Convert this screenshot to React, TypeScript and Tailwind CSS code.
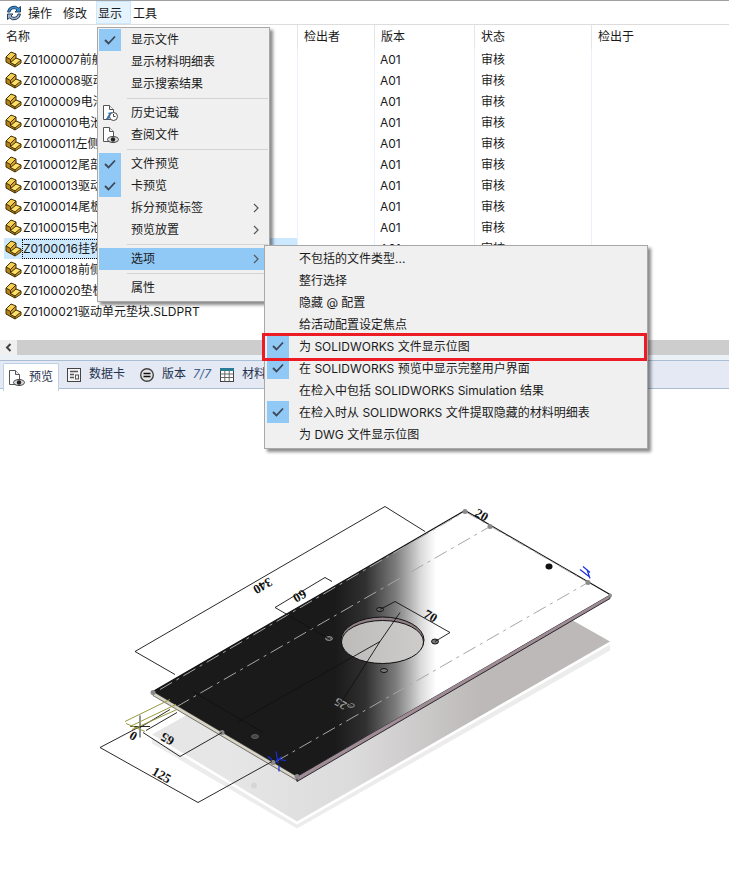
const names = ["Z0100007前舱","Z0100008驱动","Z0100009电池","Z0100010电池","Z0100011左侧","Z0100012尾部","Z0100013驱动","Z0100014尾板","Z0100015电池","Z0100016挂钩","Z0100018前侧","Z0100020垫板","Z0100021驱动单元垫块.SLDPRT"];

function PartIcon() {
  return (
    <svg width="17" height="17" viewBox="0 0 17 17" className="shrink-0">
      <path d="M1 6 L6 1 L11 3 L11 7 L16 9 V12 L10 16 L1 11 Z" fill="#d9a22a" />
      <path d="M1 6 L6 1 L11 3 L5.5 8.5 Z" fill="#f5cf50" />
      <path d="M5.5 11.5 L11 7 L16 9 L10 14 Z" fill="#fbe06c" />
      <path d="M1 6 L5.5 8.5 V11.5 L10 14 V16 L1 11 Z" fill="#b5821a" />
      <path d="M1 6 L6 1 L11 3 L11 7 L16 9 V12 L10 16 L1 11 Z M1 6 L5.5 8.5 L11 3 M5.5 8.5 V11.5 L10 14 L16 9 M10 14 V16 M5.5 11.5 L11 7" fill="none" stroke="#3f2f05" strokeWidth="1" strokeLinejoin="round" />
    </svg>
  );
}

function AppIcon() {
  return (
    <svg width="16" height="16" viewBox="0 0 16 16" className="shrink-0">
      <path d="M1.5 7 A6.5 6.5 0 0 1 12.5 3 L14.5 1.5 L14.5 7 L9 7 L11 5 A4 4 0 0 0 4 7 Z" fill="#2f8fd6" stroke="#27405e" strokeWidth="1" strokeLinejoin="round" />
      <path d="M14.5 9 A6.5 6.5 0 0 1 3.5 13 L1.5 14.5 L1.5 9 L7 9 L5 11 A4 4 0 0 0 12 9 Z" fill="#9fb3c6" stroke="#27405e" strokeWidth="1" strokeLinejoin="round" />
    </svg>
  );
}

function Doc({ children }: { children?: React.ReactNode }) {
  return (
    <svg width="18" height="18" viewBox="0 0 18 18" className="shrink-0">
      <path d="M2.5 1.5 H8.5 L12.5 5.5 V15.5 H2.5 Z" fill="#fff" stroke="#555" />
      <path d="M8.5 1.5 V5.5 H12.5" fill="#eee" stroke="#555" />
      {children}
    </svg>
  );
}

const EyeBits = (
  <>
    <ellipse cx="12" cy="13.5" rx="5.5" ry="3" fill="#d8d8d8" stroke="#444" />
    <circle cx="12" cy="13.5" r="2.2" fill="#222" />
  </>
);
const ClockBits = (
  <>
    <path d="M5 15 L8 10 L6.5 9 L11 8 L11.5 12 L10 11 L7.5 15 Z" fill="#2b78c4" />
    <circle cx="12.5" cy="12.5" r="4" fill="#fff" stroke="#444" />
    <path d="M12.5 10 V12.5 H14.5" fill="none" stroke="#444" />
  </>
);

function Check() {
  return (
    <svg width="12" height="10" viewBox="0 0 12 10">
      <path d="M1 5 L4.5 8.5 L11 1.5" fill="none" stroke="#3c4654" strokeWidth="1.8" />
    </svg>
  );
}

function Chevron() {
  return (
    <svg width="6" height="10" viewBox="0 0 6 10" className="shrink-0">
      <path d="M1 1 L5 5 L1 9" fill="none" stroke="#555" strokeWidth="1.2" />
    </svg>
  );
}

function MenuItem({ label, checked, icon, arrow, active }: { label: string; checked?: boolean; icon?: React.ReactNode; arrow?: boolean; active?: boolean }) {
  return (
    <div className={`flex h-[22px] items-center ${active ? "bg-[#90c8f6]" : ""}`}>
      <div className={`flex h-[22px] w-[22px] shrink-0 items-center justify-center ${checked ? "bg-[#90c8f6]" : ""}`}>
        {checked ? <Check /> : icon}
      </div>
      <span className="ml-[10px] flex-1 whitespace-nowrap">{label}</span>
      {arrow ? <div className="mr-[9px]"><Chevron /></div> : null}
    </div>
  );
}

function Sep() {
  return (
    <div className="flex h-[7px] items-center pl-[28px]">
      <div className="h-px w-full bg-[#d4d4d4]" />
    </div>
  );
}

function SubItem({ label, checked }: { label: string; checked?: boolean }) {
  return (
    <div className="flex h-[22px] items-center">
      <div className={`flex h-[22px] w-[22px] shrink-0 items-center justify-center ${checked ? "bg-[#90c8f6]" : ""}`}>
        {checked ? <Check /> : null}
      </div>
      <span className="ml-[10px] whitespace-nowrap pt-[2px]">{label}</span>
    </div>
  );
}

function Tab({ icon, label, extra, width }: { icon: React.ReactNode; label: string; extra?: string; width: string }) {
  return (
    <div className={`flex shrink-0 items-center gap-[7px] ${width}`}>
      {icon}
      <span className="mb-[2px] whitespace-nowrap text-[#1f3350]">{label}</span>
      {extra ? <span className="mb-[2px] italic text-[#3f5f95]">{extra}</span> : null}
    </div>
  );
}

function Plate() {
  const dash = "14 5 3 5";
  return (
    <svg viewBox="0 390 729 491" className="h-full w-full" fontFamily="'Liberation Serif', serif">
      <defs>
        <linearGradient id="top" gradientUnits="userSpaceOnUse" x1="335" y1="0" x2="436" y2="0">
          <stop offset="0" stopColor="#1a1a1a" />
          <stop offset="0.3" stopColor="#303030" />
          <stop offset="0.6" stopColor="#7c7c7c" />
          <stop offset="0.85" stopColor="#dadada" />
          <stop offset="1" stopColor="#ffffff" />
        </linearGradient>
        <linearGradient id="shadow" gradientUnits="userSpaceOnUse" x1="230" y1="0" x2="480" y2="0">
          <stop offset="0" stopColor="#e6e6e6" />
          <stop offset="0.5" stopColor="#dcdbdb" />
          <stop offset="1" stopColor="#bdb9b9" />
        </linearGradient>
        <linearGradient id="hole" gradientUnits="userSpaceOnUse" x1="340" y1="0" x2="425" y2="0">
          <stop offset="0" stopColor="#bdbaba" />
          <stop offset="1" stopColor="#cfcccc" />
        </linearGradient>
      </defs>

      {/* shadow */}
      <path d="M152 738 L297 825 L610 645 L610 651 L297 829 L152 744 Z" fill="#ececec" />
      <path d="M152 735 L297 822 L610 642 L465 560 Z" fill="url(#shadow)" />
      <circle cx="254" cy="786" r="3" fill="#d6d6d6" />

      {/* plate edge */}
      <path d="M153 692 L297 777 L297 781 L153 696 Z" fill="#d9d5c6" stroke="#222" strokeWidth="0.6" />
      <path d="M297 777 L610 595 L610 599 L297 782 Z" fill="#a08c96" stroke="#1a1a1a" strokeWidth="0.9" />

      {/* plate top */}
      <path d="M153 692 L465 511 L610 595 L297 777 Z" fill="url(#top)" />
      <path d="M153 692 L465 511 L610 595" fill="none" stroke="#111" strokeWidth="1.2" />

      {/* centre lines */}
      <g fill="none" stroke="#a6a6a6" strokeWidth="1" strokeDasharray={dash}>
        <path d="M160 690 L465 512" />
        <path d="M177 707 L490 527" />
        <path d="M276 762 L588 583" />
        <path d="M465 512 L588 583" />
      </g>
      <g fill="#8a8a8a">
        <circle cx="153" cy="693" r="2.5" />
        <circle cx="465" cy="512" r="2.5" />
        <circle cx="490" cy="527" r="2.5" />
        <circle cx="588" cy="583" r="2.5" />
        <circle cx="610" cy="596" r="2" />
        <circle cx="297" cy="777" r="2.5" />
        <circle cx="273" cy="763" r="2.5" />
        <circle cx="222" cy="733" r="2.5" />
      </g>

      {/* large hole */}
      <ellipse cx="382.5" cy="640.5" rx="41.5" ry="23" fill="#8f7f86" stroke="#111" />
      <ellipse cx="382.5" cy="642.5" rx="41" ry="21.5" fill="url(#hole)" stroke="#111" />

      {/* small holes */}
      <ellipse cx="549" cy="567" rx="3.5" ry="3" fill="#111" />
      <ellipse cx="435" cy="642" rx="3.5" ry="2.5" fill="#777" stroke="#111" />
      <ellipse cx="384" cy="671" rx="3.5" ry="2" fill="#777" stroke="#111" />
      <ellipse cx="380" cy="610" rx="3.5" ry="2" fill="#666" stroke="#111" />
      <ellipse cx="329" cy="639" rx="3.5" ry="2" fill="#555" stroke="#ccc" strokeWidth="0.5" />
      <ellipse cx="351" cy="706" rx="3.5" ry="2" fill="#444" stroke="#ccc" strokeWidth="0.5" />
      <ellipse cx="255" cy="737" rx="3.5" ry="2" fill="#444" stroke="#888" strokeWidth="0.5" />

      {/* dimensions */}
      <g fill="none" stroke="#111" strokeWidth="0.9">
        <path d="M175 675 L135 652 L385 507 L425 532" />
        <path d="M330 640 L275 608 L325 578 L332 582" />
        <path d="M380 610 L395 602 L450 633 L435 642" />
        <path d="M100 748 L140 727" />
        <path d="M100 748 L198 803 L272 762" />
        <path d="M143 733 L180 757 L222 733" />
        <path d="M237 723 L380 642 L400 613" />
        <path d="M380 642 L343 700 L353 706" />
        <path d="M193 692 L263 733" />
        <path d="M140 716 V738 M130 727 H150" />
        <path d="M140 728 L170 710 M146 731 L177 713" />
      </g>
      <g fill="none" stroke="#9a9a3c" strokeWidth="1">
        <path d="M125 722 L170 700 M130 727 L176 705 M132 730 L177 710 M126 724 L145 732" />
      </g>

      <g fill="#111" fontSize="13" fontWeight="600" textAnchor="middle">
        <text transform="translate(263 587) rotate(150)" y="5">340</text>
        <text transform="translate(300 597) rotate(150)" y="5">60</text>
        <text transform="translate(431 616) rotate(30)" y="5">70</text>
        <text transform="translate(167 740) rotate(210)" y="5">65</text>
        <text transform="translate(162 775) rotate(30)" y="5">125</text>
        <text transform="translate(133 737) rotate(210)" y="5">0</text>
        <text transform="translate(482 515) rotate(30)" y="5">20</text>
        <text transform="translate(340 705) rotate(210)" y="5" fill="#999" fontSize="12">25</text>
      </g>

      {/* blue triad */}
      <g fill="none" stroke="#1a2fe0" strokeWidth="1.2">
        <path d="M268 757 L272 760 M276 752 L278 764 M282 757 L276 762 M279 760 L286 761 M279 766 V772" />
        <path d="M580 570 L589 577 M583 567 L590 573 M587 570 L590 579" />
      </g>
    </svg>
  );
}

export default function App() {
  return (
    <div className="relative flex h-[881px] w-[729px] flex-col overflow-hidden bg-white text-[12px] text-[#1a1a1a] font-['Inter','Noto_Sans_CJK_SC',sans-serif]">
      {/* window top edge */}
      <div className="h-px shrink-0 bg-[#a0a0a0]" />

      {/* menu bar */}
      <div className="flex h-[24px] shrink-0 items-center border-b border-[#dcdcdc] pl-[6px]">
        <AppIcon />
        <span className="ml-[6px] w-[35px] pt-[2px]">操作</span>
        <span className="w-[33px] pt-[2px]">修改</span>
        <div className="flex h-[23px] w-[35px] items-center border border-[#cce8ff] bg-[#e5f3ff] pl-[1px] pt-[2px]">显示</div>
        <span className="ml-[2px] pt-[2px]">工具</span>
      </div>

      {/* list */}
      <div className="relative h-[315px] shrink-0">
        <div className="grid h-[24px] grid-cols-[297px_77px_100px_117px_1fr] items-center">
          <div className="pl-[6px]">名称</div>
          <div className="flex h-full items-center border-l border-[#e5e5e5] pl-[6px]">检出者</div>
          <div className="flex h-full items-center border-l border-[#e5e5e5] pl-[6px]">版本</div>
          <div className="flex h-full items-center border-l border-[#e5e5e5] pl-[6px]">状态</div>
          <div className="flex h-full items-center border-l border-[#e5e5e5] pl-[6px]">检出于</div>
        </div>
        {names.map((n, i) => (
          <div key={n} className="grid h-[21px] grid-cols-[297px_77px_100px_117px_1fr] items-center">
            <div className={`ml-[4px] flex h-full items-center pl-px ${i === 9 ? "bg-[#cce8ff]" : ""}`}>
              <PartIcon />
              <span className={`whitespace-nowrap ${i === 9 ? "border border-dotted border-black" : "px-px"}`}>{n}</span>
            </div>
            <div className="h-full border-l border-[#eaf1fb]" />
            <div className="flex h-full items-center border-l border-[#eaf1fb] pl-[5px]">{i <= 9 ? "A01" : null}</div>
            <div className="flex h-full items-center border-l border-[#eaf1fb] pl-[6px]">{i <= 9 ? "审核" : null}</div>
            <div className="h-full border-l border-[#eaf1fb]" />
          </div>
        ))}
        <div className="grid h-[18px] grid-cols-[297px_77px_100px_117px_1fr]">
          <div />
          <div className="border-l border-[#eaf1fb]" />
          <div className="border-l border-[#eaf1fb]" />
          <div className="border-l border-[#eaf1fb]" />
          <div className="border-l border-[#eaf1fb]" />
        </div>
      </div>

      {/* horizontal scrollbar */}
      <div className="flex h-[15px] shrink-0 bg-[#cdcdcd]">
        <div className="flex w-[17px] items-center justify-center bg-[#f0f0f0]">
          <svg width="7" height="9" viewBox="0 0 7 9">
            <path d="M5.5 1 L2 4.5 L5.5 8" fill="none" stroke="#444" strokeWidth="2" />
          </svg>
        </div>
      </div>
      <div className="h-[5px] shrink-0 bg-[#eaf1f7]" />

      {/* tabs */}
      <div className="relative flex h-[29px] shrink-0 items-center border-y border-[#a9bdd4] bg-[#e4e9f4] pl-[65px]">
        <div className="absolute left-[3px] top-[2px] flex h-[28px] w-[56px] items-center gap-[3px] rounded-t-[2px] border border-b-0 border-[#bcd0e6] bg-white pl-[3px]">
          <Doc>{EyeBits}</Doc>
          <span className="mb-[2px] ml-px text-[#1f3350]">预览</span>
        </div>
        <Tab
          width="w-[74px]"
          label="数据卡"
          icon={
            <svg width="17" height="16" viewBox="0 0 17 16" className="shrink-0">
              <rect x="2.5" y="1.5" width="13" height="13" fill="#f4f4f4" stroke="#444" />
              <path d="M5 4.5 H13 M5 7.5 H9 M5 10.5 H9" stroke="#555" strokeWidth="1.4" />
              <rect x="10.5" y="8" width="3" height="4" fill="none" stroke="#555" />
            </svg>
          }
        />
        <Tab
          width="w-[80px]"
          label="版本"
          extra="7/7"
          icon={
            <svg width="16" height="16" viewBox="0 0 16 16" className="shrink-0">
              <circle cx="8" cy="8" r="6.3" fill="#e4e4e4" stroke="#444" strokeWidth="1.4" />
              <path d="M4.5 6.5 H11.5 M4.5 9.5 H11.5" stroke="#111" strokeWidth="1.6" />
            </svg>
          }
        />
        <Tab
          width="w-[60px]"
          label="材料"
          icon={
            <svg width="16" height="16" viewBox="0 0 16 16" className="shrink-0">
              <rect x="1.5" y="1.5" width="13" height="13" fill="#fff" stroke="#444" />
              <rect x="1" y="1" width="14" height="3" fill="#2a7d94" />
              <path d="M1.5 7 H14.5 M1.5 10.5 H14.5 M5.8 4 V14.5 M10.2 4 V14.5" stroke="#666" />
            </svg>
          }
        />
      </div>

      {/* preview */}
      <div className="min-h-0 flex-1">
        <Plate />
      </div>

      {/* display menu */}
      <div className="absolute left-[97px] top-[27px] h-[275px] w-[173px] border border-[#a8a8a8] bg-[#f0f0f0] pl-px pr-[1px] pt-px shadow-[3px_3px_3px_rgba(0,0,0,0.45)]">
        <MenuItem label="显示文件" checked />
        <MenuItem label="显示材料明细表" />
        <MenuItem label="显示搜索结果" />
        <Sep />
        <MenuItem label="历史记载" icon={<Doc>{ClockBits}</Doc>} />
        <MenuItem label="查阅文件" icon={<Doc>{EyeBits}</Doc>} />
        <Sep />
        <MenuItem label="文件预览" checked />
        <MenuItem label="卡预览" checked />
        <MenuItem label="拆分预览标签" arrow />
        <MenuItem label="预览放置" arrow />
        <Sep />
        <MenuItem label="选项" arrow active />
        <Sep />
        <MenuItem label="属性" />
      </div>

      {/* options submenu */}
      <div className="absolute left-[264px] top-[245px] h-[204px] w-[384px] border border-[#a8a8a8] bg-[#f0f0f0] pl-[2px] pt-px shadow-[3px_3px_3px_rgba(0,0,0,0.45)]">
        <SubItem label="不包括的文件类型..." />
        <SubItem label="整行选择" />
        <SubItem label="隐藏 @ 配置" />
        <SubItem label="给活动配置设定焦点" />
        <SubItem label="为 SOLIDWORKS 文件显示位图" checked />
        <SubItem label="在 SOLIDWORKS 预览中显示完整用户界面" checked />
        <SubItem label="在检入中包括 SOLIDWORKS Simulation 结果" />
        <SubItem label="在检入时从 SOLIDWORKS 文件提取隐藏的材料明细表" checked />
        <SubItem label="为 DWG 文件显示位图" />
      </div>

      {/* red highlight */}
      <div className="absolute left-[262px] top-[333px] h-[28px] w-[385px] border-[3px] border-[#ed1c24]" />
    </div>
  );
}
